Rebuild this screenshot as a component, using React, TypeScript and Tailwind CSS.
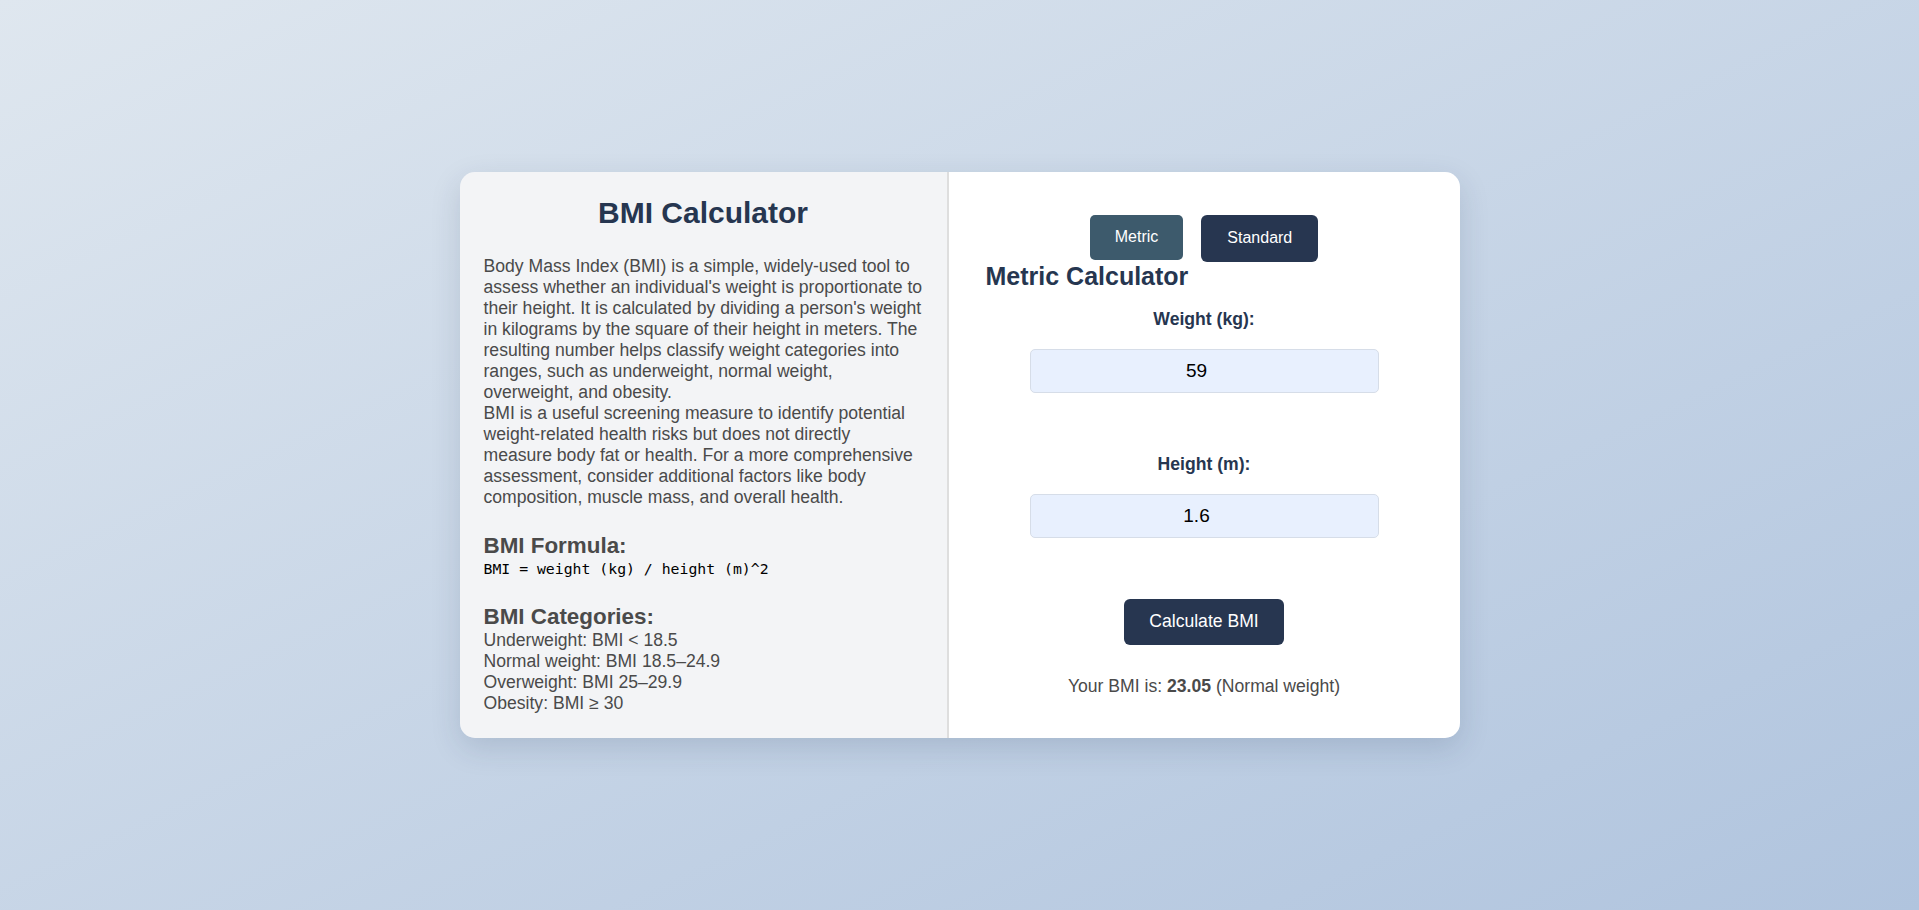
import { useState } from 'react'

const sans = { fontFamily: '"Liberation Sans", Arial, sans-serif' }

export default function App() {
  const [unit, setUnit] = useState<'metric' | 'standard'>('metric')
  const [weight, setWeight] = useState('59')
  const [height, setHeight] = useState('1.6')
  const [bmi, setBmi] = useState(23.05)

  const category = (v: number) => {
    if (v < 18.5) return 'Underweight'
    if (v < 25) return 'Normal weight'
    if (v < 30) return 'Overweight'
    return 'Obesity'
  }

  const calculate = () => {
    const w = parseFloat(weight)
    const h = parseFloat(height)
    if (!w || !h) return
    setBmi(Math.round((w / (h * h)) * 100) / 100)
  }

  return (
    <div
      className="min-h-screen w-full flex items-center justify-center bg-gradient-to-br from-[#dfe7ef] to-[#b0c4de]"
      style={sans}
    >
      <div className="flex w-[1000px] rounded-[15px] overflow-hidden shadow-[0_10px_30px_rgba(30,50,80,0.15)]">
        {/* info side */}
        <div className="w-[489px] bg-[#f3f4f6] border-r-2 border-[#dedede] p-6 text-[#4a4a4a]">
          <h1 className="text-[30px] leading-[34px] font-bold text-center text-[#263650]">BMI Calculator</h1>
          <p className="mt-[26px] text-[17.6px] leading-[21px]">
            Body Mass Index (BMI) is a simple, widely-used tool to assess whether an individual's weight is
            proportionate to their height. It is calculated by dividing a person's weight in kilograms by the
            square of their height in meters. The resulting number helps classify weight categories into
            ranges, such as underweight, normal weight, overweight, and obesity.
            <br />
            BMI is a useful screening measure to identify potential weight-related health risks but does not
            directly measure body fat or health. For a more comprehensive assessment, consider additional
            factors like body composition, muscle mass, and overall health.
          </p>

          <h3 className="mt-[25px] text-[22.4px] leading-[26px] font-bold">BMI Formula:</h3>
          <code
            className="block text-[14.8px] leading-[20px] text-black"
            style={{ fontFamily: '"DejaVu Sans Mono", "Liberation Mono", monospace' }}
          >
            BMI = weight (kg) / height (m)^2
          </code>

          <h3 className="mt-[25px] text-[22.4px] leading-[26px] font-bold">BMI Categories:</h3>
          <ul className="text-[17.6px] leading-[21px]">
            <li>Underweight: BMI &lt; 18.5</li>
            <li>Normal weight: BMI 18.5–24.9</li>
            <li>Overweight: BMI 25–29.9</li>
            <li>Obesity: BMI ≥ 30</li>
          </ul>
        </div>

        {/* calculator side */}
        <div className="flex-1 bg-white px-[37px] flex flex-col items-center justify-center">
          <div className="flex items-start gap-[18px]">
            <button
              onClick={() => setUnit('metric')}
              className="h-[45px] px-[25px] rounded-[5px] bg-[#3d5a6c] text-white text-[16px]"
            >
              Metric
            </button>
            <button
              onClick={() => setUnit('standard')}
              className="h-[47px] px-[26px] rounded-[6px] bg-[#273650] text-white text-[16px]"
            >
              Standard
            </button>
          </div>

          <h2 className="self-start text-[25px] leading-[28px] font-bold text-[#263650]">
            {unit === 'metric' ? 'Metric' : 'Standard'} Calculator
          </h2>

          <label className="mt-[19px] text-[17.6px] leading-[20px] font-bold text-[#263650]">Weight (kg):</label>
          <input
            type="number"
            value={weight}
            onChange={e => setWeight(e.target.value)}
            className="mt-[20px] w-[349px] h-[44px] rounded-[5px] border border-[#d6dde8] bg-[#e8f0fe] text-center text-[19px] text-black outline-none"
          />

          <label className="mt-[61px] text-[17.6px] leading-[20px] font-bold text-[#263650]">Height (m):</label>
          <input
            type="number"
            value={height}
            onChange={e => setHeight(e.target.value)}
            className="mt-[20px] w-[349px] h-[44px] rounded-[5px] border border-[#d6dde8] bg-[#e8f0fe] text-center text-[19px] text-black outline-none"
          />

          <button
            onClick={calculate}
            className="mt-[61px] h-[46px] px-[25px] rounded-[6px] bg-[#273650] text-white text-[17.6px]"
          >
            Calculate BMI
          </button>

          <p className="mt-[31px] text-[17.6px] leading-[20px] text-[#4a4a4a]">
            Your BMI is: <strong>{bmi.toFixed(2)}</strong> ({category(bmi)})
          </p>
        </div>
      </div>
    </div>
  )
}
